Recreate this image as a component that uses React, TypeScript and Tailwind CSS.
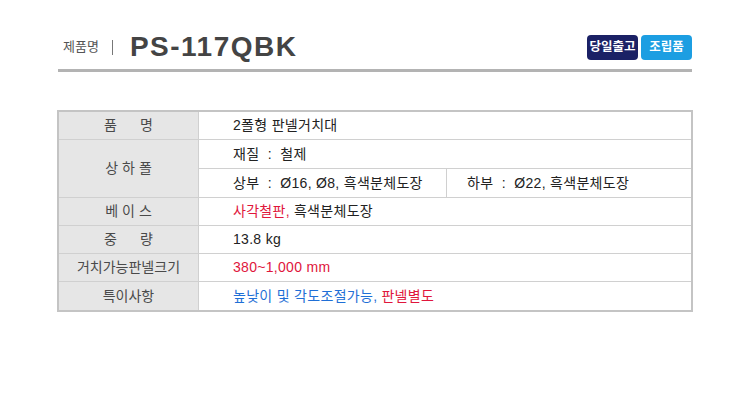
import React from 'react';

const font = { fontFamily: '"Liberation Sans", "Noto Sans CJK KR", sans-serif' };

function Label({ chars, gap }: { chars: string[]; gap: string }) {
  return (
    <div className={`w-[140px] shrink-0 flex items-center justify-center ${gap} bg-[#e6e6e6] border-r border-[#d0d0d0] text-[14px] text-[#4a4a4a]`}>
      {chars.map((c, i) => (
        <span key={i}>{c}</span>
      ))}
    </div>
  );
}

function Row({ label, gap = 'gap-0', children, last }: { label: string[]; gap?: string; children: React.ReactNode; last?: boolean }) {
  return (
    <div className={`flex h-[28px] ${last ? '' : 'border-b border-[#d0d0d0]'}`}>
      <Label chars={label} gap={gap} />
      <div className="flex-1 flex items-center pl-[34px] text-[14px] tracking-[0.3px] text-[#222]">{children}</div>
    </div>
  );
}

export default function App() {
  return (
    <div className="w-[755px] h-[408px] bg-white" style={font}>
      <div className="ml-[58px] w-[634px] pt-[30px]">
        <div className="flex items-center h-[34px]">
          <span className="ml-[5px] text-[13px] text-[#555]">제품명</span>
          <span className="ml-[13px] w-px h-[15px] bg-[#777]" />
          <span className="ml-[17px] text-[28px] font-bold text-[#444] tracking-[1.5px]">PS-117QBK</span>
          <div className="ml-auto flex gap-[3px]">
            <span className="h-[25px] w-[51px] rounded-[4px] bg-[#1b2165] text-white text-[12.5px] font-bold flex items-center justify-center">당일출고</span>
            <span className="h-[25px] w-[51px] rounded-[4px] bg-[#1c9ee2] text-white text-[12.5px] font-bold flex items-center justify-center">조립품</span>
          </div>
        </div>
        <div className="mt-[5px] h-[3px] bg-[#b3b3b3]" />
      </div>

      <div className="ml-[57px] mt-[38px] w-[636px] border-2 border-[#c4c4c4]">
        <Row label={['품', '명']} gap="gap-[23px]">2폴형 판넬거치대</Row>
        <div className="flex border-b border-[#d0d0d0]">
          <Label chars={['상', '하', '폴']} gap="gap-[4px]" />
          <div className="flex-1 flex flex-col text-[14px] tracking-[0.3px] text-[#222]">
            <div className="h-[29px] flex items-center pl-[34px] border-b border-[#d0d0d0] whitespace-pre">재질  :  철제</div>
            <div className="h-[28px] flex whitespace-pre">
              <div className="w-[248px] flex items-center pl-[34px] border-r border-[#d0d0d0]">상부  :  Ø16, Ø8, 흑색분체도장</div>
              <div className="flex-1 flex items-center pl-[20px]">하부  :  Ø22, 흑색분체도장</div>
            </div>
          </div>
        </div>
        <Row label={['베', '이', '스']} gap="gap-[4px]">
          <span className="text-[#e0163c]">사각철판,</span>
          <span className="ml-[4px]">흑색분체도장</span>
        </Row>
        <Row label={['중', '량']} gap="gap-[23px]">13.8 kg</Row>
        <Row label={['거치가능판넬크기']}>
          <span className="text-[#e0163c]">380~1,000 mm</span>
        </Row>
        <Row label={['특이사항']} last>
          <span className="text-[#1f6fd6]">높낮이 및 각도조절가능,</span>
          <span className="ml-[4px] text-[#e0163c]">판넬별도</span>
        </Row>
      </div>
    </div>
  );
}
